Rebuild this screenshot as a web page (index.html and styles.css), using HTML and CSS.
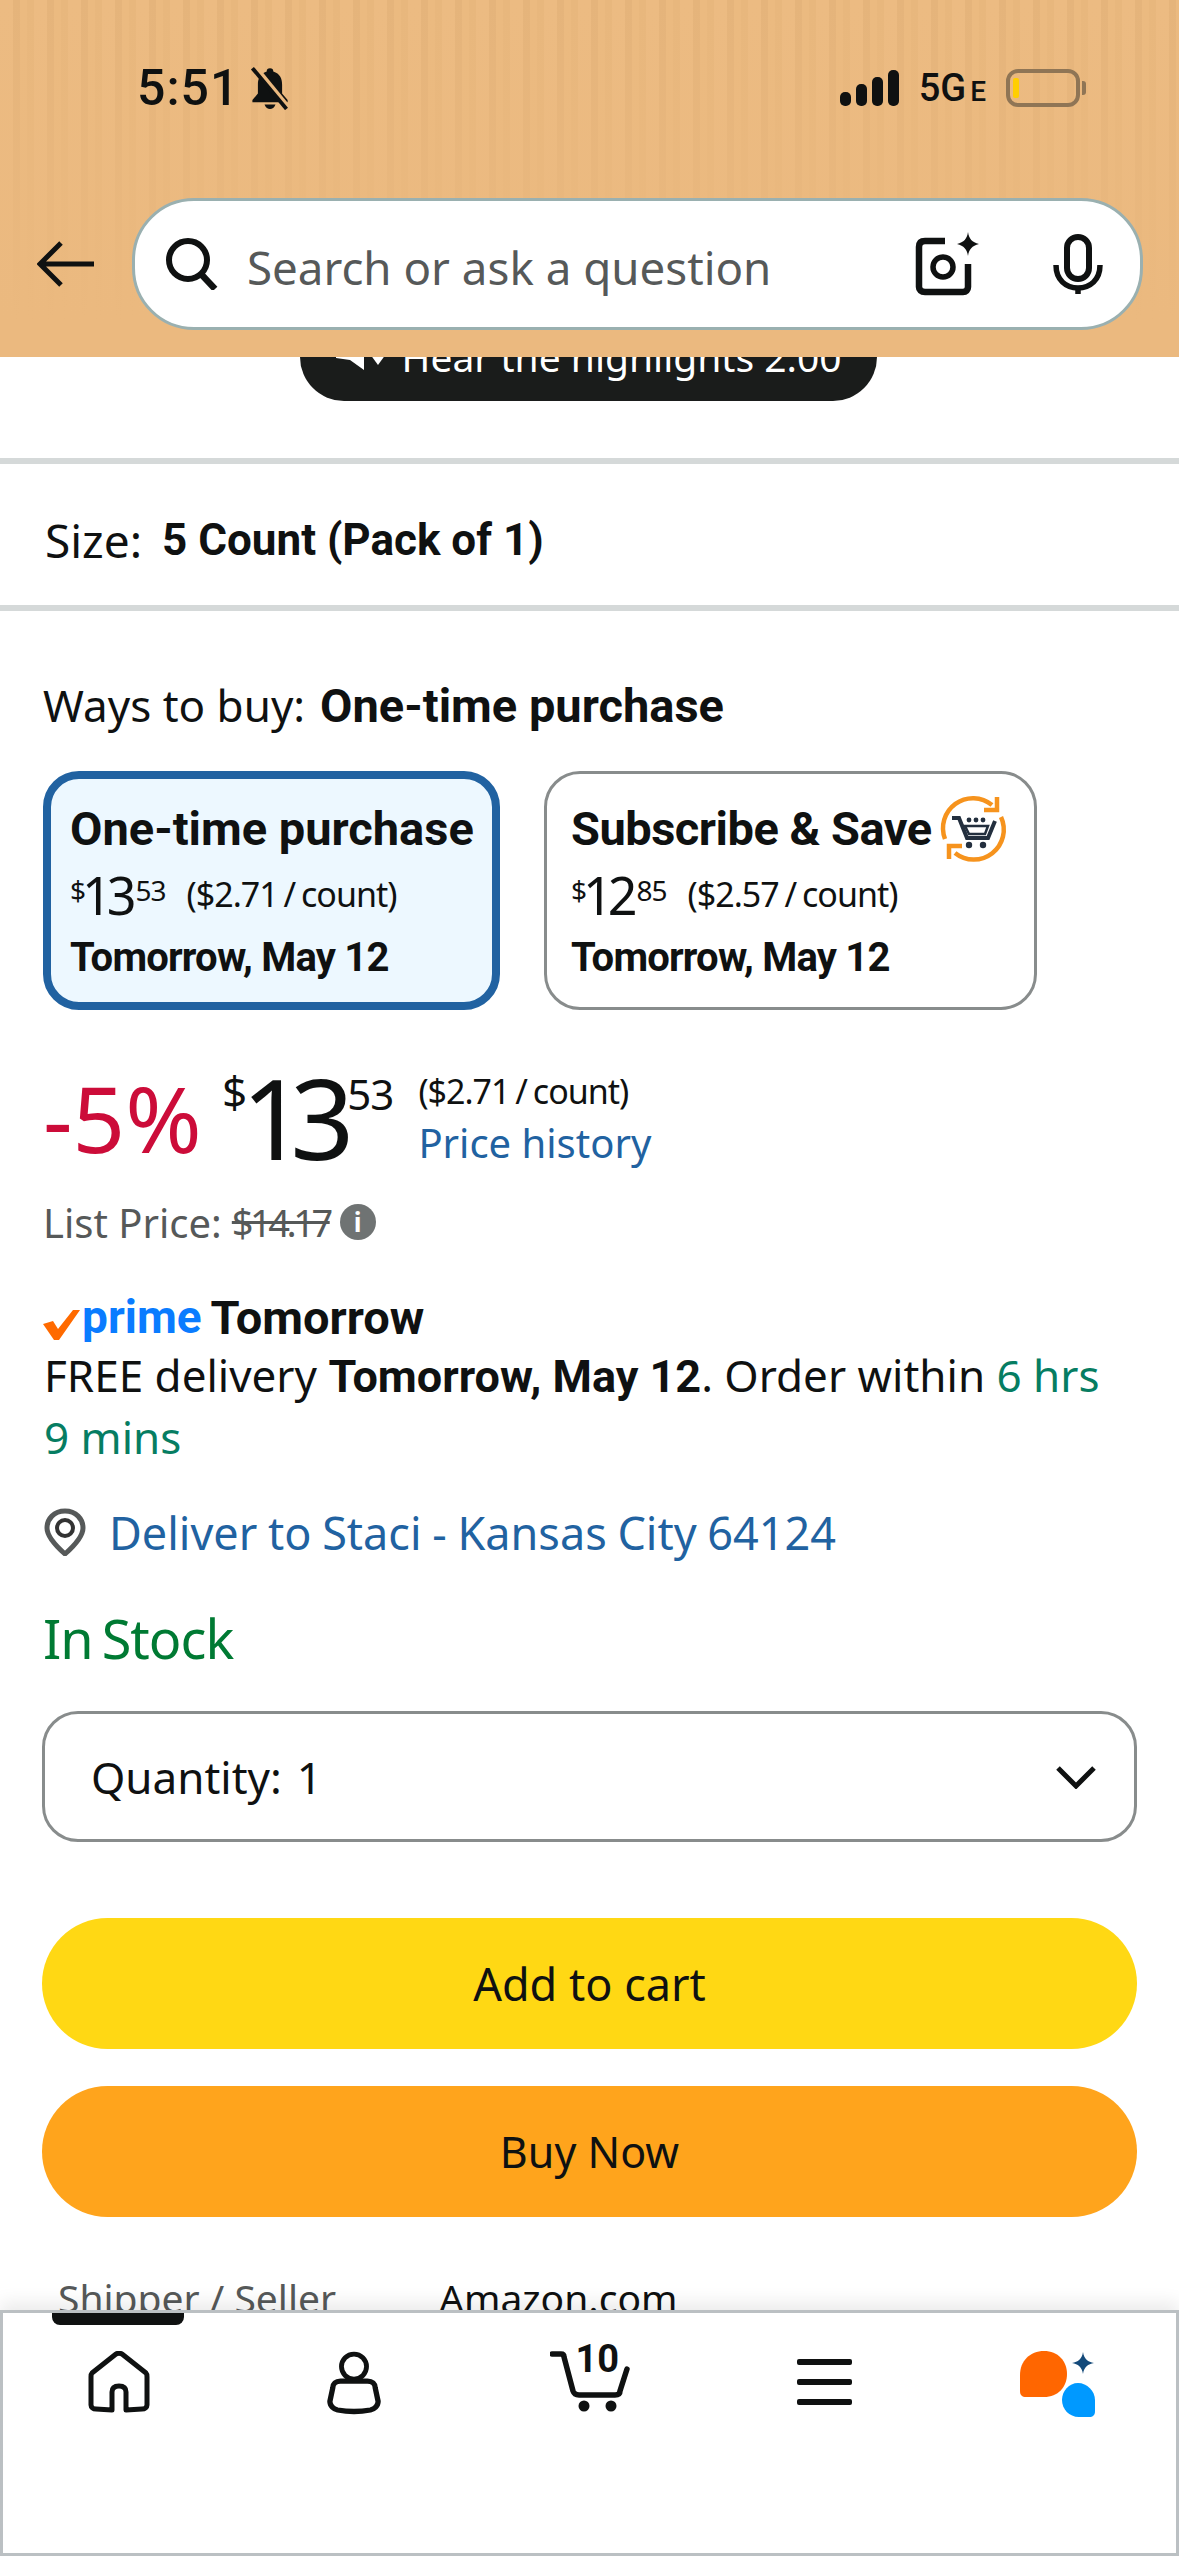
FILE: index.html
```html
<!DOCTYPE html>
<html lang="en">

<head>
    <meta charset="UTF-8">
    <meta name="viewport" content="width=device-width, initial-scale=1.0">
    <title>Amazon product</title>
    <link rel="stylesheet" href="styles.css">
</head>

<body>
    <div class="phone">
        <header class="topBar">
            <div class="statusBar">
                <div class="statusLeft">
                    <span class="time">5:51</span>
                    <svg class="bell" viewBox="0 0 40 40" width="44" height="44">
                        <path d="M20 2c-2 0-3 1-3 3C11 7 9 11 9 17v8l-5 6v2h32v-2l-5-6v-8c0-6-2-10-8-12 0-2-1-3-3-3z" fill="#0f1111"/>
                        <path d="M15 35c1 3 3 4 5 4s4-1 5-4z" fill="#0f1111"/>
                        <path d="M6.5 0l31 38" stroke="#ebb97f" stroke-width="3.5"/>
                        <path d="M4 2l31 37" stroke="#0f1111" stroke-width="3.5"/>
                    </svg>
                </div>
                <div class="statusRight">
                    <div class="signal">
                        <i class="s1"></i><i class="s2"></i><i class="s3"></i><i class="s4"></i>
                    </div>
                    <span class="net">5G<small>E</small></span>
                    <div class="battery"><i></i></div>
                    <div class="batteryTip"></div>
                </div>
            </div>
            <div class="searchRow">
                <svg class="back" viewBox="0 0 58 46" width="58" height="46">
                    <path d="M57 23H5M24 2L3 23l21 21" fill="none" stroke="#0f1111" stroke-width="5"/>
                </svg>
                <div class="searchBox">
                    <svg class="searchIcon" viewBox="0 0 54 52" width="54" height="52">
                        <circle cx="24" cy="22" r="19" fill="none" stroke="#0f1111" stroke-width="6"/>
                        <path d="M37 36l14 15" stroke="#0f1111" stroke-width="6.5" fill="none"/>
                    </svg>
                    <span class="searchText">Search or ask a question</span>
                    <svg class="camera" viewBox="0 0 66 64" width="66" height="64">
                        <path d="M30 9H10C6 9 4 11 4 15v40c0 3 2 5 6 5h38c3 0 5-2 5-5V32" fill="none" stroke="#0f1111" stroke-width="6.5"/>
                        <circle cx="28" cy="35" r="10" fill="none" stroke="#0f1111" stroke-width="5.5"/>
                        <path d="M53 0c1 7 4 10 11 12-7 2-10 5-11 12-1-7-4-10-11-12 7-2 10-5 11-12z" fill="#0f1111"/>
                    </svg>
                    <svg class="mic" viewBox="0 0 50 60" width="50" height="60">
                        <rect x="14" y="3" width="22" height="42" rx="11" fill="none" stroke="#0f1111" stroke-width="6"/>
                        <path d="M3 31c0 15 10 23 22 23s22-8 22-23" fill="none" stroke="#0f1111" stroke-width="5.5"/>
                        <path d="M25 52v8" stroke="#0f1111" stroke-width="5.5"/>
                    </svg>
                </div>
            </div>
        </header>

        <main class="content">
            <div class="audioWrap">
                <div class="audioPill">
                    <svg viewBox="0 0 56 40" width="56" height="40">
                        <path d="M2 10l14-2L30 0v34L16 24 2 22z" fill="#fff"/>
                        <path d="M36 18l8 11 8-11z" fill="#fff"/>
                    </svg>
                    <span>Hear the highlights 2:00</span>
                </div>
            </div>
            <div class="divider"></div>
            <div class="sizeRow">
                <span>Size:</span>
                <b>5 Count (Pack of 1)</b>
            </div>
            <div class="divider"></div>

            <div class="waysRow">
                <span>Ways to buy:</span>
                <b>One-time purchase</b>
            </div>

            <div class="cards">
                <div class="card cardActive">
                    <div class="cardTitle">One-time purchase</div>
                    <div class="cardPrice">
                        <span class="sym">$</span><span class="whole">13</span><span class="frac">53</span>
                        <span class="unit">($2.71 / count)</span>
                    </div>
                    <div class="cardDate">Tomorrow, May 12</div>
                </div>
                <div class="card">
                    <div class="cardTitle">
                        <span class="subLabel">Subscribe &amp; Save</span>
                        <svg class="subIcon" viewBox="0 0 70 70" width="70" height="70">
                            <path d="M7 46A30 30 0 0 1 54 12" fill="none" stroke="#f6931d" stroke-width="4.5"/>
                            <path d="M63 24A30 30 0 0 1 17 60" fill="none" stroke="#f6931d" stroke-width="4.5"/>
                            <path d="M59 4v13H46" fill="none" stroke="#f6931d" stroke-width="4.5"/>
                            <path d="M11 66V53h13" fill="none" stroke="#f6931d" stroke-width="4.5"/>
                            <path d="M14 25h7l8 20h21l7-17" fill="none" stroke="#232f3e" stroke-width="4"/>
                            <path d="M27 33l23 0-3 8H31z" fill="none" stroke="#232f3e" stroke-width="2.5"/>
                            <circle cx="31" cy="52" r="3.2" fill="#232f3e"/>
                            <circle cx="45" cy="52" r="3.2" fill="#232f3e"/>
                            <circle cx="31" cy="27" r="2.4" fill="#232f3e"/>
                            <circle cx="38" cy="27" r="2.4" fill="#232f3e"/>
                            <circle cx="45" cy="27" r="2.4" fill="#232f3e"/>
                        </svg>
                    </div>
                    <div class="cardPrice">
                        <span class="sym">$</span><span class="whole">12</span><span class="frac">85</span>
                        <span class="unit">($2.57 / count)</span>
                    </div>
                    <div class="cardDate">Tomorrow, May 12</div>
                </div>
            </div>

            <div class="priceRow">
                <span class="discount">-5%</span>
                <div class="bigPrice">
                    <span class="sym">$</span><span class="whole">13</span><span class="frac">53</span>
                </div>
                <div class="priceSide">
                    <div class="unit">($2.71 / count)</div>
                    <div class="link history">Price history</div>
                </div>
            </div>

            <div class="listRow">
                <span>List Price:</span>
                <s>$14.17</s>
                <span class="info">i</span>
            </div>

            <div class="primeRow">
                <svg class="check" viewBox="0 0 38 32" width="38" height="32">
                    <path d="M1 15l10-3 5 8L31 1h7L17 31h-5z" fill="#ff6a00"/>
                </svg>
                <span class="primeWord">prime</span>
                <b>Tomorrow</b>
            </div>

            <p class="delivery">FREE delivery <b>Tomorrow, May 12</b>. Order within <span class="timer">6 hrs<br>9 mins</span></p>

            <div class="deliverTo">
                <svg viewBox="0 0 42 48" width="42" height="48">
                    <path d="M21 3C10 3 3 11 3 20c0 8 9 18 18 26 9-8 18-18 18-26 0-9-7-17-18-17z" fill="#fff" stroke="#565959" stroke-width="5"/>
                    <circle cx="21" cy="20" r="8" fill="none" stroke="#333" stroke-width="4"/>
                </svg>
                <span class="link">Deliver to Staci - Kansas City 64124</span>
            </div>

            <div class="stock">In Stock</div>

            <div class="quantity">
                <span>Quantity:&nbsp; 1</span>
                <svg viewBox="0 0 40 24" width="40" height="24">
                    <path d="M2 3l18 18L38 3" fill="none" stroke="#0f1111" stroke-width="5"/>
                </svg>
            </div>

            <div class="btn btnCart">Add to cart</div>
            <div class="btn btnBuy">Buy Now</div>

            <div class="shipRow">
                <span class="shipLabel">Shipper / Seller</span>
                <span>Amazon.com</span>
            </div>
        </main>

        <nav class="bottomNav">
            <div class="navMark"></div>
            <div class="navItem navHome">
                <svg viewBox="0 0 62 62" width="62" height="62">
                    <path d="M24 59l-16-1c-3 0-5-2-5-4V26c0-2 0-3 1-4L28 3c2-1 4-1 6 0l24 19c1 1 1 2 1 4v28c0 2-2 4-5 4l-16 1V41c0-4-2-6-7-6s-7 2-7 6z" fill="none" stroke="#0f1111" stroke-width="5" stroke-linejoin="round"/>
                </svg>
            </div>
            <div class="navItem navUser">
                <svg viewBox="0 0 56 64" width="54" height="64">
                    <circle cx="28" cy="15" r="13" fill="none" stroke="#0f1111" stroke-width="5"/>
                    <path d="M14 30h28c5 0 8 3 8 7l3 14c0 5-4 8-8 9-11 2-23 2-34 0-4-1-8-4-8-9l3-14c0-4 3-7 8-7z" fill="none" stroke="#0f1111" stroke-width="5.5"/>
                </svg>
            </div>
            <div class="navItem navCart">
                <svg viewBox="0 0 80 62" width="80" height="62">
                    <path d="M2 3h9c2 0 3 1 3 3l9 34c1 3 3 4 6 4h36c3 0 5-1 5-4l7-22" fill="none" stroke="#0f1111" stroke-width="5.5" stroke-linecap="round"/>
                    <circle cx="34" cy="55" r="5.5" fill="#0f1111"/>
                    <circle cx="61" cy="55" r="5.5" fill="#0f1111"/>
                </svg>
                <span class="cartCount">10</span>
            </div>
            <div class="navItem">
                <div class="burger"><i></i><i></i><i></i></div>
            </div>
            <div class="navItem navRufus">
                <svg viewBox="0 0 76 66" width="76" height="66">
                    <path d="M24 0c14 0 23 10 23 23s-9 23-23 23H6c-4 0-6-2-6-6V24C0 10 10 0 24 0z" fill="#ff6600"/>
                    <path d="M58 32c9 0 17 8 17 17v11c0 4-2 6-6 6H59c-10 0-17-8-17-17s7-17 16-17z" fill="#0099ff"/>
                    <path d="M63 1c1 7 5 10 11 11-6 1-10 4-11 11-1-7-5-10-11-11 6-1 10-4 11-11z" fill="#144a7a"/>
                </svg>
            </div>
        </nav>
    </div>
</body>

</html>
```

FILE: styles.css
```css
* {
    margin: 0;
    padding: 0;
    box-sizing: border-box;
}

body {
    width: 1179px;
    height: 2556px;
    overflow: hidden;
    background: #fff;
    color: #0f1111;
    font-family: "Noto Sans", "Open Sans", sans-serif;
}

b,
.cardTitle,
.cardDate {
    font-family: "Roboto", "Noto Sans", sans-serif;
    font-weight: 700;
}

.phone {
    display: flex;
    flex-direction: column;
    height: 2556px;
}

/* top bar */
.topBar {
    height: 357px;
    flex-shrink: 0;
    position: relative;
    z-index: 2;
    background:
        linear-gradient(to bottom, rgba(235, 185, 127, 0) 0, #ebb97f 320px),
        repeating-linear-gradient(90deg, #ecbb82 0, #ecbb82 13px, #e5b47b 13px, #e5b47b 20px, #ebba80 20px, #ebba80 27px, #e8b77d 27px, #e8b77d 34px);
}

.statusBar {
    height: 176px;
    padding: 62px 93px 0 137px;
    display: flex;
    justify-content: space-between;
    align-items: flex-start;
}

.statusLeft {
    display: flex;
    align-items: center;
    gap: 9px;
    height: 52px;
}

.time {
    font-family: "Roboto", sans-serif;
    font-size: 50px;
    font-weight: 500;
    letter-spacing: 1px;
}

.statusRight {
    display: flex;
    align-items: center;
    height: 52px;
}

.signal {
    display: flex;
    align-items: flex-end;
    gap: 5px;
    height: 36px;
    margin-right: 20px;
}

.signal i {
    display: block;
    width: 11px;
    border-radius: 5px;
    background: #0f1111;
}

.s1 { height: 14px; }
.s2 { height: 22px; }
.s3 { height: 29px; }
.s4 { height: 36px; }

.net {
    font-family: "Roboto", sans-serif;
    font-size: 38px;
    font-weight: 500;
    margin-right: 20px;
}

.net small {
    font-size: 28px;
    margin-left: 4px;
}

.battery {
    width: 74px;
    height: 38px;
    border: 4px solid #8f7555;
    border-radius: 12px;
    padding: 5px 3px;
}

.battery i {
    display: block;
    width: 6px;
    height: 20px;
    border-radius: 2px;
    background: #ffce00;
}

.batteryTip {
    width: 4px;
    height: 14px;
    margin-left: 2px;
    border-radius: 0 3px 3px 0;
    background: #8f7555;
}

.searchRow {
    display: flex;
    align-items: center;
    padding: 22px 36px 0 37px;
    gap: 37px;
}

.back {
    flex-shrink: 0;
}

.searchBox {
    flex: 1;
    height: 132px;
    display: flex;
    align-items: center;
    background: #fff;
    border: 3px solid #9ab0b0;
    border-radius: 62px;
    padding: 0 37px 0 29px;
}

.searchText {
    flex: 1;
    margin: 5px 0 0 29px;
    font-size: 45.7px;
    color: #565959;
}

.mic {
    margin-left: 72px;
}

/* main scroll area */
.content {
    flex: 1;
    overflow: hidden;
    font-size: 44px;
}

.audioWrap {
    height: 101px;
    display: flex;
    justify-content: center;
}

.audioPill {
    width: 577px;
    height: 90px;
    margin-top: -46px;
    margin-right: 3px;
    display: flex;
    align-items: center;
    gap: 12px;
    padding-left: 34px;
    flex-shrink: 0;
    border-radius: 44px;
    background: #1a1c1b;
    color: #fff;
    font-size: 39px;
}

.divider {
    height: 6px;
    background: #d5d9d9;
}

.sizeRow {
    height: 141px;
    padding: 10px 0 0 45px;
    display: flex;
    align-items: center;
    gap: 20px;
    font-size: 46px;
}

.waysRow {
    height: 60px;
    margin: 64px 0 0 43px;
    display: flex;
    align-items: center;
    gap: 15px;
}

.waysRow b {
    font-size: 47px;
}

.sizeRow b {
    font-size: 44px;
}

.cards {
    display: flex;
    gap: 44px;
    margin: 36px 0 0 43px;
}

.card {
    width: 493px;
    height: 239px;
    display: flex;
    flex-direction: column;
    padding: 24px 0 0 24px;
    border: 3px solid #888c8c;
    border-radius: 36px;
}

.cardActive {
    width: 457px;
    padding: 19px 0 0 19px;
    border: 8px solid #2162a1;
    background: #edf8ff;
}

.cardTitle {
    height: 60px;
    display: flex;
    align-items: center;
    gap: 6px;
    font-size: 47px;
}

.subLabel {
    letter-spacing: -0.5px;
}

.cardPrice {
    height: 69px;
    padding-top: 3px;
    display: flex;
    align-items: center;
}

.cardPrice .sym {
    font-size: 28px;
    align-self: flex-start;
    margin: 10px -4px 0 0;
}

.cardPrice .whole {
    font-size: 52px;
    letter-spacing: -5px;
}

.cardPrice .frac {
    font-size: 28px;
    align-self: flex-start;
    margin: 10px 0 0 4px;
    letter-spacing: -1px;
}

.unit {
    font-size: 34px;
    letter-spacing: -1px;
    word-spacing: -2px;
}

.cardPrice .unit {
    margin-left: 21px;
}

.cardDate {
    height: 60px;
    display: flex;
    align-items: center;
    font-size: 40px;
    letter-spacing: -0.8px;
}

.priceRow {
    height: 120px;
    margin: 47px 0 0 43px;
    display: flex;
    align-items: center;
}

.discount {
    width: 180px;
    font-size: 92px;
    color: #cc0c39;
}

.bigPrice {
    display: flex;
    align-items: flex-start;
    line-height: 1;
}

.bigPrice .sym {
    font-size: 44px;
    margin: 8px -6px 0 -1px;
}

.bigPrice .whole {
    font-size: 112px;
    letter-spacing: -15px;
}

.bigPrice .frac {
    font-size: 42px;
    margin: 12px 0 0 8px;
    letter-spacing: -1px;
}

.priceSide {
    margin-left: 25px;
}

.priceSide .unit {
    margin-top: 4px;
}

.link {
    color: #2162a1;
}

.history {
    font-size: 40px;
    margin-top: 1px;
}

.listRow {
    height: 50px;
    margin: 20px 0 0 43px;
    display: flex;
    align-items: center;
    gap: 10px;
    font-size: 40px;
    color: #565959;
}

.listRow s {
    font-size: 38px;
    letter-spacing: -3.5px;
}

.info {
    width: 36px;
    height: 36px;
    border-radius: 50%;
    display: flex;
    align-items: center;
    justify-content: center;
    background: #6f7373;
    color: #fff;
    font-size: 26px;
    font-weight: 700;
}

.primeRow {
    height: 60px;
    margin: 40px 0 0 42px;
    display: flex;
    align-items: center;
}

.primeRow b {
    font-size: 47px;
}

.check {
    margin-top: 16px;
}

.primeWord {
    font-family: "Roboto", sans-serif;
    font-size: 46px;
    font-weight: 700;
    color: #0a7cff;
    margin: 0 9px 0 2px;
}

.delivery {
    margin: -2px 40px 0 44px;
    line-height: 60px;
    font-size: 44px;
}

.delivery b {
    font-size: 45px;
}

.timer {
    color: #067d62;
}

.deliverTo {
    height: 60px;
    margin: 35px 0 0 44px;
    display: flex;
    align-items: center;
    gap: 23px;
    font-size: 45px;
    word-spacing: -1px;
}

.stock {
    height: 70px;
    margin: 41px 0 0 43px;
    line-height: 70px;
    font-size: 54px;
    letter-spacing: -1px;
    word-spacing: -4px;
    color: #007a33;
}

.quantity {
    height: 131px;
    margin: 38px 42px 0;
    padding: 0 38px 0 46px;
    display: flex;
    align-items: center;
    justify-content: space-between;
    word-spacing: -4px;
    border: 3px solid #888c8c;
    border-radius: 36px;
}

.btn {
    height: 131px;
    margin: 37px 42px 0;
    display: flex;
    align-items: center;
    justify-content: center;
    border-radius: 66px;
}

.btnCart {
    margin-top: 76px;
    font-size: 45px;
    background: #ffd814;
}

.btnBuy {
    font-size: 43px;
    background: #ffa41c;
}

.shipRow {
    margin: 54px 0 0 58px;
    display: flex;
    font-size: 39px;
}

.shipLabel {
    width: 381px;
    color: #565959;
}

/* bottom nav */
.bottomNav {
    height: 246px;
    flex-shrink: 0;
    position: relative;
    display: grid;
    grid-template-columns: repeat(5, 1fr);
    align-items: start;
    padding-top: 38px;
    background: #fff;
    border: 3px solid #bbc0c3;
    box-shadow: 0 -8px 16px rgba(15, 17, 17, 0.08);
}

.navMark {
    position: absolute;
    left: 49px;
    top: 0;
    width: 132px;
    height: 12px;
    background: #0f1111;
    border-radius: 0 0 8px 8px;
}

.navItem {
    display: flex;
    justify-content: center;
    position: relative;
}

.navHome {
    margin-left: -3px;
}

.navUser {
    margin-left: -2px;
}

.navRufus {
    margin-left: -2px;
}

.navCart svg {
    margin-left: 2px;
}

.cartCount {
    position: absolute;
    left: 50%;
    top: -14px;
    margin-left: -14px;
    font-family: "Roboto", sans-serif;
    font-size: 38px;
    font-weight: 700;
}

.burger {
    display: flex;
    flex-direction: column;
    gap: 14px;
    width: 55px;
    margin-top: 8px;
}

.burger i {
    display: block;
    height: 6px;
    border-radius: 2px;
    background: #0f1111;
}
```
